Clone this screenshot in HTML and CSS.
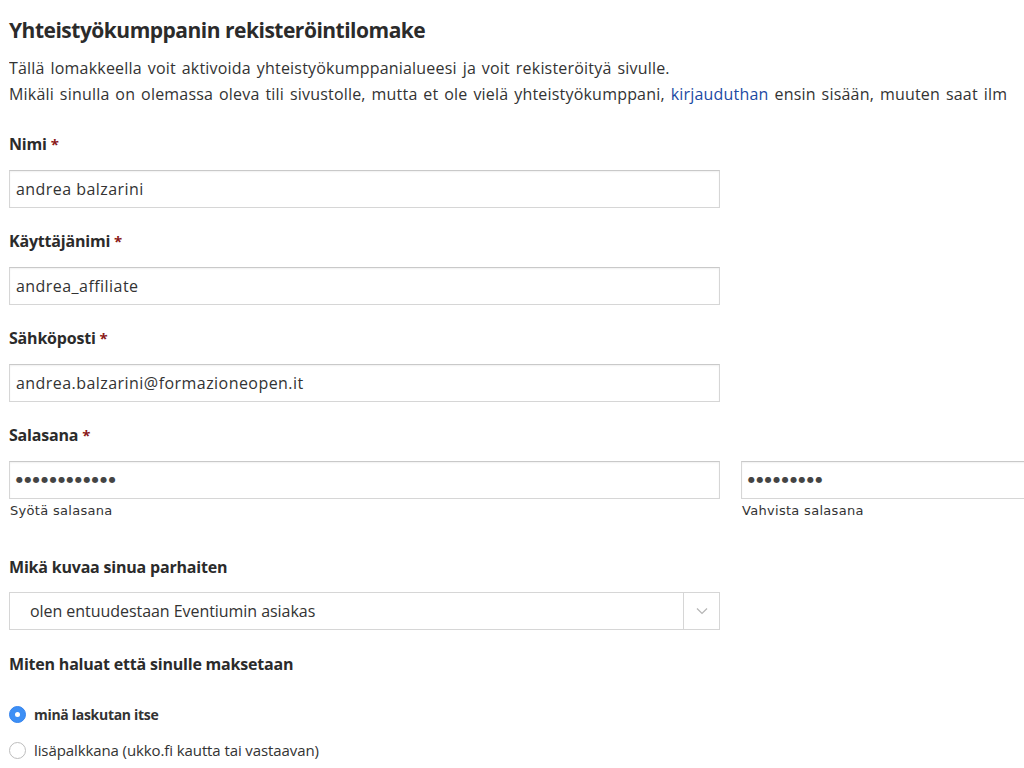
FILE: index.html
```html
<!DOCTYPE html>
<html lang="fi">
<head>
<meta charset="utf-8">
<title>Yhteistyökumppanin rekisteröintilomake</title>
<link rel="stylesheet" href="styles.css">
</head>
<body>
<div class="page">
  <h1 class="title">Yhteistyökumppanin rekisteröintilomake</h1>
  <p class="intro">Tällä lomakkeella voit aktivoida yhteistyökumppanialueesi ja voit rekisteröityä sivulle.<br>Mikäli sinulla on olemassa oleva tili sivustolle, mutta et ole vielä yhteistyökumppani, <a class="link" href="#">kirjauduthan</a> ensin sisään, muuten saat ilm</p>

  <form class="form">
    <div class="field">
      <label class="label">Nimi <span class="req">*</span></label>
      <input class="input" type="text" value="andrea balzarini">
    </div>
    <div class="field">
      <label class="label">Käyttäjänimi <span class="req">*</span></label>
      <input class="input" type="text" value="andrea_affiliate">
    </div>
    <div class="field">
      <label class="label">Sähköposti <span class="req">*</span></label>
      <input class="input" type="text" value="andrea.balzarini@formazioneopen.it">
    </div>
    <div class="field">
      <label class="label">Salasana <span class="req">*</span></label>
      <div class="pw-row">
        <div class="pw-col">
          <div class="input dots">●●●●●●●●●●●●</div>
          <div class="hint">Syötä salasana</div>
        </div>
        <div class="pw-col">
          <div class="input dots">●●●●●●●●●</div>
          <div class="hint">Vahvista salasana</div>
        </div>
      </div>
    </div>
    <div class="field field-select">
      <label class="label">Mikä kuvaa sinua parhaiten</label>
      <div class="select">
        <span class="select-text">olen entuudestaan Eventiumin asiakas</span>
        <span class="select-arrow">
          <svg width="12" height="8" viewBox="0 0 12 8"><path d="M1 1.5 L6 6.5 L11 1.5" fill="none" stroke="#b5b5b5" stroke-width="1.2"/></svg>
        </span>
      </div>
    </div>
    <div class="field field-radio">
      <label class="label">Miten haluat että sinulle maksetaan</label>
      <div class="radios">
        <div class="radio-row">
          <span class="radio checked"></span>
          <span class="radio-label bold">minä laskutan itse</span>
        </div>
        <div class="radio-row">
          <span class="radio"></span>
          <span class="radio-label">lisäpalkkana (ukko.fi kautta tai vastaavan)</span>
        </div>
      </div>
    </div>
  </form>
</div>
</body>
</html>
```
FILE: styles.css
```css
html, body {
  margin: 0;
  padding: 0;
  background: #fff;
  overflow: hidden;
}
body {
  font-family: "Open Sans", Lato, Arial, sans-serif;
  color: #333;
  font-size: 16px;
}
.page {
  padding: 0 0 0 9px;
  width: 1500px;
}
.title {
  font-size: 21px;
  line-height: 26px;
  font-weight: 700;
  margin: 17px 0 12px;
  color: #2b2b2b;
  letter-spacing: -0.5px;
}
.intro {
  margin: 0;
  line-height: 26px;
  white-space: nowrap;
  width: 1015px;
  overflow: hidden;
  letter-spacing: 0.2px;
  word-spacing: 1.5px;
}
.link {
  color: #1c4aa3;
  text-decoration: none;
}
.form {
  margin-top: 25px;
}
.field {
  margin-bottom: 21px;
}
.label {
  display: block;
  font-weight: 700;
  line-height: 24px;
  margin-bottom: 14px;
  color: #2b2b2b;
  letter-spacing: -0.2px;
}
.req {
  color: #8b1a1a;
  font-size: 15px;
}
.input {
  display: block;
  box-sizing: border-box;
  width: 711px;
  height: 38px;
  margin: 0;
  padding: 0 6px;
  border: 1px solid #d6d6d6;
  border-top-color: #c9c9c9;
  box-shadow: inset 0 1px 2px rgba(0,0,0,0.06);
  font-family: inherit;
  font-size: 16px;
  letter-spacing: 0.45px;
  color: #333;
  background: #fff;
  outline: none;
}
.dots {
  font-family: "DejaVu Sans", sans-serif;
  line-height: 36px;
  font-size: 8px;
  letter-spacing: 1.45px;
  color: #444;
}
.pw-row {
  display: flex;
  gap: 21px;
}
.hint {
  font-family: "DejaVu Sans", Verdana, sans-serif;
  font-size: 13px;
  line-height: 16px;
  margin-top: 4px;
  padding-left: 1px;
  letter-spacing: 0.3px;
  color: #333;
}
.field-select {
  margin-top: 36px;
  margin-bottom: 22px;
}
.field-select .label {
  margin-bottom: 13px;
}
.select {
  box-sizing: border-box;
  width: 711px;
  height: 38px;
  border: 1px solid #d6d6d6;
  display: flex;
  align-items: center;
}
.select-text {
  flex: 1;
  padding-left: 20px;
  letter-spacing: -0.05px;
}
.select-arrow {
  width: 35px;
  height: 100%;
  border-left: 1px solid #d6d6d6;
  display: flex;
  align-items: center;
  justify-content: center;
}
.field-radio .label {
  margin-bottom: 20px;
}
.radio-row {
  display: flex;
  align-items: center;
  height: 36px;
}
.radio {
  box-sizing: border-box;
  width: 17px;
  height: 17px;
  border-radius: 50%;
  border: 1px solid #bdbdbd;
  background: #fff;
  margin-right: 8px;
  position: relative;
  flex: none;
}
.radio.checked {
  background: #3d8ff5;
  border-color: #3584ee;
}
.radio.checked::after {
  content: "";
  position: absolute;
  left: 5px;
  top: 5px;
  width: 5px;
  height: 5px;
  border-radius: 50%;
  background: #fff;
}
.radio-label {
  font-size: 15px;
  letter-spacing: -0.1px;
}
.radio-label.bold {
  font-weight: 700;
  font-size: 14px;
  letter-spacing: -0.3px;
}
```
